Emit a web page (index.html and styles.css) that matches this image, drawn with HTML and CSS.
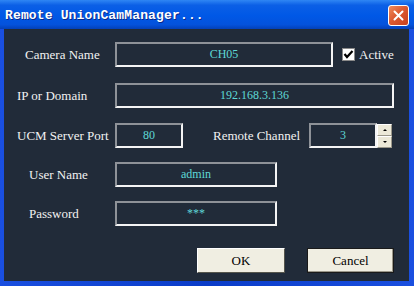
FILE: index.html
```html
<!DOCTYPE html>
<html lang="en">
  <head>
    <meta charset="UTF-8" />
    <meta name="viewport" content="width=device-width, initial-scale=1.0" />
    <title>Remote UnionCamManager</title>
    <link rel="stylesheet" href="styles.css">
  </head>
  <body>
    <div class="window">
      <div class="titlebar">
        <span class="title">Remote UnionCamManager...</span>
        <button class="close" title="Close">
          <svg width="11" height="11" viewBox="0 0 11 11">
            <path d="M1.5 1.5 L9.5 9.5 M9.5 1.5 L1.5 9.5" stroke="#fff" stroke-width="2" stroke-linecap="round" />
          </svg>
        </button>
      </div>

      <div class="frame">
        <div class="client">
          <div class="row">
            <label class="lbl lbl-cam">Camera Name</label>
            <div class="field w-cam">CH05</div>
            <span class="check">
              <svg width="11" height="11" viewBox="0 0 11 11">
                <path d="M1.5 5 L4 8 L9.5 2" stroke="#000" stroke-width="2.2" fill="none" />
              </svg>
            </span>
            <span class="check-text">Active</span>
          </div>

          <div class="row">
            <label class="lbl lbl-ip">IP or Domain</label>
            <div class="field w-ip">192.168.3.136</div>
          </div>

          <div class="row row-port">
            <label class="lbl lbl-ip">UCM Server Port</label>
            <div class="field w-port">80</div>
            <label class="lbl-channel">Remote Channel</label>
            <div class="field w-port">3</div>
            <div class="spin">
              <span class="spin-btn"><i class="arrow up"></i></span>
              <span class="spin-btn"><i class="arrow down"></i></span>
            </div>
          </div>

          <div class="row row-user">
            <label class="lbl lbl-user">User Name</label>
            <div class="field w-user">admin</div>
          </div>

          <div class="row row-user">
            <label class="lbl lbl-user">Password</label>
            <div class="field w-user">***</div>
          </div>

          <div class="buttons">
            <button class="btn btn-ok">OK</button>
            <button class="btn btn-cancel">Cancel</button>
          </div>
        </div>
      </div>
    </div>
  </body>
</html>
```

FILE: styles.css
```css
body {
  margin: 0;
  background: #0d3fc8;
  font-family: "Liberation Serif", "Times New Roman", serif;
}
.window {
  width: 414px;
  height: 286px;
  display: flex;
  flex-direction: column;
}
.titlebar {
  height: 29px;
  display: flex;
  align-items: center;
  justify-content: space-between;
  padding: 0 5px 0 5px;
  box-sizing: border-box;
  background: linear-gradient(#2f86f4 0%, #0b5fe6 18%, #0058e6 55%, #0452dc 85%, #0340b8 100%);
}
.title {
  font-family: "Liberation Mono", "Courier New", monospace;
  font-weight: bold;
  font-size: 13px;
  letter-spacing: 0.15px;
  color: #fff;
  text-shadow: 1px 1px 0 #0a2a8a;
  margin-top: 1px;
}
.close {
  width: 21px;
  height: 21px;
  padding: 0;
  margin-top: 1px;
  border: 1px solid #fff;
  border-radius: 3px;
  background: linear-gradient(135deg, #f08c5c 0%, #dc5a32 45%, #c8401e 100%);
  display: flex;
  align-items: center;
  justify-content: center;
}

.frame {
  flex: 1;
  padding: 0 5px 5px 4px;
  background: linear-gradient(90deg, #1a4fe0, #0a3cc8 50%, #1a4fe0);
}
.client {
  height: 100%;
  box-sizing: border-box;
  background: #212b39;
  padding-top: 13px;
  display: flex;
  flex-direction: column;
}

.row {
  display: flex;
  align-items: center;
  height: 25px;
  margin-bottom: 16px;
}
.row-port {
  margin-top: -1px;
  margin-bottom: 14px;
}
.row-user {
  margin-bottom: 14px;
}

.lbl {
  width: 111px;
  flex: none;
  box-sizing: border-box;
  color: #f2f2f2;
  font-size: 13px;
  white-space: nowrap;
}
.lbl-cam {
  padding-left: 21px;
}
.lbl-ip {
  padding-left: 13px;
}
.lbl-user {
  padding-left: 25px;
}
.lbl-channel {
  color: #f2f2f2;
  font-size: 13px;
  margin-left: 30px;
  width: 96px;
  white-space: nowrap;
}

.field {
  height: 25px;
  box-sizing: border-box;
  border: 2px solid;
  border-color: #8e9298 #f4f4f4 #f4f4f4 #8e9298;
  color: #5fd8d6;
  font-size: 12px;
  display: flex;
  align-items: center;
  justify-content: center;
}
.w-cam {
  width: 218px;
}
.w-ip {
  width: 279px;
}
.w-port {
  width: 68px;
}
.w-user {
  width: 162px;
}

.check {
  width: 13px;
  height: 13px;
  box-sizing: border-box;
  margin-left: 9px;
  background: #fff;
  border: 1px solid #8a8a8a;
  display: flex;
  align-items: center;
  justify-content: center;
}
.check-text {
  color: #f2f2f2;
  font-size: 13px;
  margin-left: 4px;
  margin-top: 1px;
}

.spin {
  display: flex;
  flex-direction: column;
  width: 15px;
  height: 24px;
}
.spin-btn {
  flex: 1;
  background: #ece9d8;
  border: 1px solid;
  border-color: #fff #9a978a #9a978a #fff;
  display: flex;
  align-items: center;
  justify-content: center;
}
.arrow {
  width: 0;
  height: 0;
  border-left: 2px solid transparent;
  border-right: 2px solid transparent;
}
.arrow.up {
  border-bottom: 2px solid #000;
}
.arrow.down {
  border-top: 2px solid #000;
}

.buttons {
  display: flex;
  justify-content: flex-end;
  gap: 22px;
  padding-right: 15px;
  margin-top: 8px;
}
.btn {
  height: 25px;
  font-family: "Liberation Serif", "Times New Roman", serif;
  font-size: 13px;
  color: #000;
  background: #f0eee2;
  border: 1px solid;
  border-color: #fff #55554c #55554c #fff;
  padding: 0;
}
.btn-ok {
  width: 88px;
}
.btn-cancel {
  width: 87px;
  border-color: #1a1a1a;
  box-shadow: inset -1px -1px 0 #9a978a;
}
```
